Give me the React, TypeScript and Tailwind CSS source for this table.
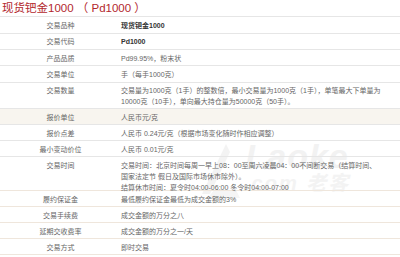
import React from 'react';

type Row = {
  label: string;
  lines: string[];
  bold?: boolean;
  shaded?: boolean;
  h: string;
  line: string;
};

const rows: Row[] = [
  { label: '交易品种', lines: ['现货钯金1000'], bold: true, h: 'h-[16.5px]', line: 'border-[#e6e6e6]' },
  { label: '交易代码', lines: ['Pd1000'], bold: true, h: 'h-[16.5px]', line: 'border-[#e6e6e6]' },
  { label: '产品品质', lines: ['Pd99.95%，粉末状'], h: 'h-[16px]', line: 'border-[#e6e6e6]' },
  { label: '交易单位', lines: ['手（每手1000克）'], h: 'h-[16.5px]', line: 'border-[#e6e6e6]' },
  {
    label: '交易数量',
    lines: [
      '交易量为1000克（1手）的整数倍，最小交易量为1000克（1手），单笔最大下单量为',
      '10000克（10手），单向最大持仓量为50000克（50手）。',
    ],
    h: 'h-[26.5px]',
    line: 'border-[#e6e6e6]',
  },
  { label: '报价单位', lines: ['人民币元/克'], shaded: true, h: 'h-[16px]', line: 'border-[#e6e6e6]' },
  { label: '报价点差', lines: ['人民币 0.24元/克（根据市场变化随时作相应调整）'], h: 'h-[16px]', line: 'border-[#e6e6e6]' },
  { label: '最小变动价位', lines: ['人民币 0.01元/克'], h: 'h-[16px]', line: 'border-[#e6e6e6]' },
  {
    label: '交易时间',
    lines: [
      '交易时间：北京时间每周一早上08：00至周六凌晨04：00不间断交易（结算时间、',
      '国家法定节 假日及国际市场休市除外）。',
      '结算休市时间：夏令时04:00-06:00  冬令时04:00-07:00',
    ],
    h: 'h-[34px]',
    line: 'border-[#efe6dc]',
  },
  { label: '履约保证金', lines: ['最低履约保证金最低为成交金额的3%'], h: 'h-[16px]', line: 'border-[#efe6dc]' },
  { label: '交易手续费', lines: ['成交金额的万分之八'], h: 'h-[16px]', line: 'border-[#efe6dc]' },
  { label: '延期交收费率', lines: ['成交金额的万分之一/天'], h: 'h-[16px]', line: 'border-[#efe6dc]' },
  { label: '交易方式', lines: ['即时交易'], h: 'h-[16px]', line: 'border-[#efe6dc]' },
];

// faint site watermark, sits under the table text
const Watermark = () => (
  <div className="pointer-events-none absolute left-[196px] top-[140px] z-0 flex items-start gap-1 select-none">
    <svg width="48" height="60" viewBox="0 0 48 60">
      <path d="M30 4 L6 54 L14 54 L34 12 Z" fill="#f3f3f3" />
      <path d="M12 58 L44 58 L40 50 L18 50 Z" fill="#f5f5f5" />
    </svg>
    <div className="-ml-1 flex flex-col items-center">
      <span className="text-[34px] font-bold italic leading-[32px] tracking-[1px] text-[#f2f2f2]">Laoke</span>
      <span className="text-[20px] font-bold italic leading-[22px] tracking-[2px] text-[#f3f3f3]">.com 老客</span>
    </div>
  </div>
);

export default function App() {
  return (
    <div className="relative h-[257px] w-[400px] overflow-hidden bg-white [font-family:'Liberation_Sans','Noto_Sans_CJK_SC',sans-serif]">
      <Watermark />
      <div className="relative z-10">
        <h1 className="h-[16px] pl-[2px] pt-[1px] text-[11.5px] leading-[14px] font-normal text-[#b3272d]">
          现货钯金1000 （ Pd1000 ）
        </h1>
        <div className="border-t border-[#e6e6e6]">
          {rows.map((r) => (
            <div
              key={r.label}
              className={`flex border-b ${r.line} ${r.h} ${r.shaded ? 'bg-[#f8f5ef]' : ''}`}
            >
              <div className="w-[121px] shrink-0 pt-[2.5px] text-center text-[7px] leading-[11px] text-[#666]">
                {r.label}
              </div>
              <div
                className={`flex-1 pt-[2.5px] text-[7px] leading-[11px] whitespace-nowrap ${
                  r.bold ? 'font-bold text-[#333]' : 'text-[#666]'
                }`}
              >
                {r.lines.map((l, i) => (
                  <div key={i}>{l}</div>
                ))}
              </div>
            </div>
          ))}
        </div>
      </div>
    </div>
  );
}
